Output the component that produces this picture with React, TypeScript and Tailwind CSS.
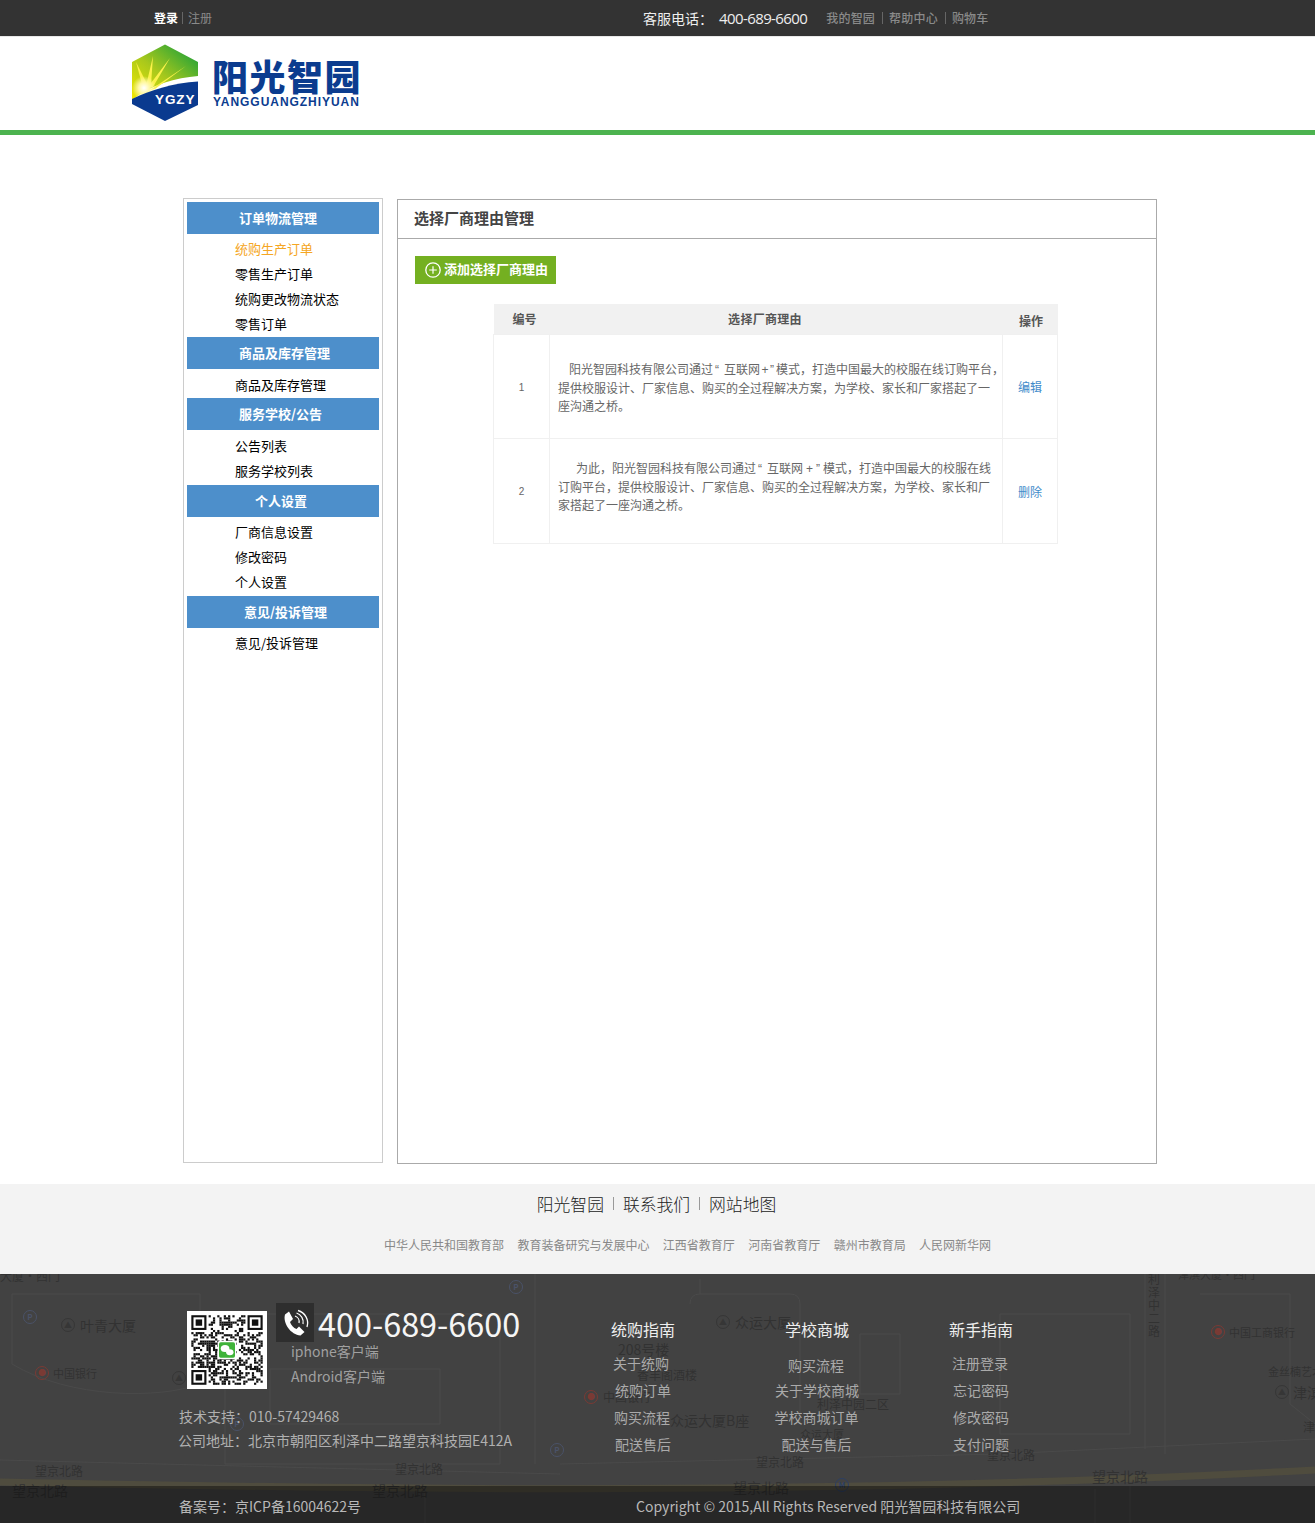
const menu = [
  { title: '订单物流管理', head: 'pl-[52px]', body: 'pt-[3px]', items: ['统购生产订单', '零售生产订单', '统购更改物流状态', '零售订单'] },
  { title: '商品及库存管理', head: 'pl-[52px]', body: 'pt-[4px]', items: ['商品及库存管理'] },
  { title: '服务学校/公告', head: 'pl-[52px]', body: 'pt-[4px] pb-px', items: ['公告列表', '服务学校列表'] },
  { title: '个人设置', head: 'pl-[68px]', body: 'pt-[3px] pb-px', items: ['厂商信息设置', '修改密码', '个人设置'] },
  { title: '意见/投诉管理', head: 'pl-[57px]', body: 'pt-[3px]', items: ['意见/投诉管理'] },
];

const guides = [
  { title: '统购指南', width: 'ml-0', items: [['关于统购', 'pr-[4px]'], ['统购订单', ''], ['购买流程', 'pr-[2px]'], ['配送售后', '']] },
  { title: '学校商城', width: 'ml-[54px]', items: [['购买流程', 'pr-[2px] pt-[2px]'], ['关于学校商城', ''], ['学校商城订单', 'pr-px'], ['配送与售后', 'pr-px']] },
  { title: '新手指南', width: 'ml-[44px]', items: [['注册登录', 'pr-[2px]'], ['忘记密码', ''], ['修改密码', ''], ['支付问题', '']] },
];

// 地图上的文字，位置相对底部区域
const mapLabels = [
  { text: '大厦·西门', x: 0, y: -8, cls: 'text-[12px]' },
  { text: '叶青大厦', x: 80, y: 41, cls: 'text-[14px]' },
  { text: '中国银行', x: 53, y: 89, cls: 'text-[11px]' },
  { text: '望京北路', x: 35, y: 187, cls: 'text-[12px]' },
  { text: '望京北路', x: 12, y: 206, cls: 'text-[14px]' },
  { text: '望京北路', x: 395, y: 185, cls: 'text-[12px]' },
  { text: '望京北路', x: 372, y: 206, cls: 'text-[14px]' },
  { text: '众运大厦', x: 735, y: 38, cls: 'text-[14px]' },
  { text: '208号楼', x: 618, y: 65, cls: 'text-[14px]' },
  { text: '香丰阁酒楼', x: 637, y: 91, cls: 'text-[12px]' },
  { text: '中国银行', x: 603, y: 113, cls: 'text-[12px]' },
  { text: '众运大厦B座', x: 670, y: 136, cls: 'text-[14px]' },
  { text: '利泽中园二区', x: 817, y: 120, cls: 'text-[12px]' },
  { text: '众运大厦', x: 800, y: 150, cls: 'text-[11px]' },
  { text: '望京北路', x: 756, y: 178, cls: 'text-[12px]' },
  { text: '望京北路', x: 733, y: 203, cls: 'text-[14px]' },
  { text: '望京北路', x: 987, y: 171, cls: 'text-[12px]' },
  { text: '望京北路', x: 1092, y: 192, cls: 'text-[14px] text-[#5a5436]' },
  { text: '中国工商银行', x: 1229, y: 48, cls: 'text-[11px]' },
  { text: '金丝楠艺术', x: 1268, y: 87, cls: 'text-[11px]' },
  { text: '津滨', x: 1293, y: 108, cls: 'text-[14px]' },
  { text: '津', x: 1303, y: 143, cls: 'text-[12px]' },
  { text: '津滨大厦·西门', x: 1178, y: -10, cls: 'text-[11px]' },
];

const mapPins = [
  { x: 30, y: 43, t: 'P', cls: 'border-[#4a5268] text-[#4a5268]' },
  { x: 516, y: 13, t: 'P', cls: 'border-[#4a5268] text-[#4a5268]' },
  { x: 557, y: 176, t: 'P', cls: 'border-[#4a5268] text-[#4a5268]' },
  { x: 237, y: 150, t: 'P', cls: 'border-[#4a5268] text-[#4a5268]' },
  { x: 42, y: 99, t: '●', cls: 'border-[#7a3a34] text-[#7a3a34]' },
  { x: 591, y: 123, t: '●', cls: 'border-[#7a3a34] text-[#7a3a34]' },
  { x: 1218, y: 58, t: '●', cls: 'border-[#7a3a34] text-[#7a3a34]' },
  { x: 68, y: 51, t: '▲', cls: 'border-[#363636] text-[#363636]' },
  { x: 179, y: 104, t: '▲', cls: 'border-[#363636] text-[#363636]' },
  { x: 723, y: 48, t: '▲', cls: 'border-[#363636] text-[#363636]' },
  { x: 1282, y: 118, t: '▲', cls: 'border-[#363636] text-[#363636]' },
  { x: 842, y: 211, t: 'M', cls: 'border-[#2c3f63] text-[#2c3f63]' },
];

function Logo() {
  return (
    <svg width="70" height="80" viewBox="130 43 70 80" className="shrink-0">
      <defs>
        <linearGradient id="top" x1="0" y1="1" x2="1" y2="0">
          <stop offset="0" stopColor="#f4e900" />
          <stop offset="0.45" stopColor="#a8c81c" />
          <stop offset="1" stopColor="#079a3e" />
        </linearGradient>
        <radialGradient id="sun" cx="0.5" cy="0.5" r="0.5">
          <stop offset="0" stopColor="#ffffff" />
          <stop offset="0.45" stopColor="#fff9a8" />
          <stop offset="1" stopColor="#fff9a8" stopOpacity="0" />
        </radialGradient>
      </defs>
      <path d="M165 44.5 L198 62 V76 C176 78 152 84 132 100 V62 Z" fill="url(#top)" />
      <path d="M143 88 L136 62 L147 84 Z M146 86 L153 56 L151 85 Z M148 87 L170 58 L153 87 Z M150 90 L186 66 L155 89 Z" fill="#fbf24a" />
      <circle cx="144" cy="88" r="12" fill="url(#sun)" />
      <path d="M198 81.5 V105 L165 121 L132 104 V99 C150 90 174 83 198 81.5 Z" fill="#0a3a8f" />
      <text x="155" y="103.5" fill="#ffffff" fontSize="13.5" fontWeight="700" letterSpacing="0.9" fontFamily="'Liberation Sans', sans-serif">
        YGZY
      </text>
    </svg>
  );
}

function QrCode() {
  const n = 33;
  const inFinder = (x: number, y: number) =>
    (x < 8 && y < 8) || (x >= n - 8 && y < 8) || (x < 8 && y >= n - 8);
  const cells: [number, number][] = [];
  for (let y = 0; y < n; y++) {
    for (let x = 0; x < n; x++) {
      if (inFinder(x, y)) continue;
      const s = Math.sin(x * 12.9898 + y * 78.233) * 43758.5453;
      if (s - Math.floor(s) < 0.5) cells.push([x, y]);
    }
  }
  const finders = [
    [0, 0],
    [n - 7, 0],
    [0, n - 7],
  ];
  return (
    <svg viewBox="-2 -2 37 37" preserveAspectRatio="none" className="w-[80px] h-[78px] bg-white shrink-0 mt-[8px] ml-[9px]">
      {cells.map(([x, y]) => (
        <rect key={`${x}-${y}`} x={x} y={y} width="1.02" height="1.02" fill="#111" />
      ))}
      {finders.map(([x, y]) => (
        <g key={`${x}-${y}`}>
          <rect x={x + 0.5} y={y + 0.5} width="6" height="6" fill="none" stroke="#111" />
          <rect x={x + 2} y={y + 2} width="3" height="3" fill="#111" />
        </g>
      ))}
      <rect x="12.2" y="12.2" width="8.6" height="8.6" rx="0.8" fill="#ffffff" />
      <rect x="12.8" y="12.8" width="7.4" height="7.4" rx="0.8" fill="#3fb33a" />
      <ellipse cx="15.6" cy="15.8" rx="2" ry="1.7" fill="#ffffff" />
      <ellipse cx="17.8" cy="17.6" rx="1.7" ry="1.4" fill="#ffffff" />
    </svg>
  );
}

function PhoneIcon() {
  return (
    <svg width="38" height="39" viewBox="0 0 38 39" className="bg-[#2e2e2e] shrink-0">
      <path
        d="M9 11.5 L13 8.5 L17 16 L14 19 C15 22 17.5 25 20.5 26 L23 23.5 L28.5 29 L24.5 32.5 C15 32 6.5 20 9 11.5 Z"
        fill="#ffffff"
      />
      <path d="M19 13 A6 6 0 0 1 23 20" fill="none" stroke="#ffffff" strokeWidth="1.3" />
      <path d="M20.5 10 A9.5 9.5 0 0 1 27 21" fill="none" stroke="#ffffff" strokeWidth="1.3" />
      <path d="M22 7.5 A13 13 0 0 1 31 24" fill="none" stroke="#ffffff" strokeWidth="1.3" />
    </svg>
  );
}

function PlusIcon() {
  return (
    <svg width="16" height="16" viewBox="0 0 16 16" fill="none" stroke="#ffffff" className="shrink-0">
      <circle cx="8" cy="8" r="7.2" strokeWidth="1.3" />
      <path d="M8 4.2 V11.8 M4.2 8 H11.8" strokeWidth="1.2" />
    </svg>
  );
}

function MapLayer() {
  return (
    <div className="absolute inset-0 overflow-hidden">
      <svg className="absolute inset-0 w-full h-full" fill="none" stroke="#4a4a4a" strokeWidth="1">
        <path d="M0 208 C300 214 800 224 1315 196" stroke="#4f4c3e" strokeWidth="7" />
        <path d="M0 186 L560 200 M560 190 L1000 180 L1315 165" />
        <path d="M12 20 H200 V110 C160 125 70 125 12 90 Z" />
        <path d="M225 40 H500 V190 H225 Z" />
        <path d="M270 95 H440 V150 H270 Z" />
        <path d="M535 0 V190 M1145 0 V175 M1165 0 V180" />
        <path d="M690 30 Q690 20 700 20 H790 Q800 20 800 30 V150" />
        <path d="M700 20 V5 M860 60 H900 V120 H860 Z" />
        <path d="M1000 40 H1130 V160 H1000 Z" />
        <path d="M1200 20 H1290 V130 L1315 150" />
        <path d="M425 212 V249 M1095 215 V249 M1130 212 V249" />
      </svg>
      {mapLabels.map((l, i) => (
        <span
          key={i}
          className={`absolute leading-[16px] whitespace-nowrap text-[#323232] ${l.cls}`}
          style={{ left: l.x, top: l.y + 2 }}
        >
          {l.text}
        </span>
      ))}
      <span className="absolute left-[1148px] top-[-2px] w-[12px] text-[12px] leading-[13px] text-[#323232]">利泽中二路</span>
      {mapPins.map((p, i) => (
        <span
          key={i}
          className={`absolute w-[14px] h-[14px] rounded-full border flex items-center justify-center text-[8px] leading-none font-bold ${p.cls}`}
          style={{ left: p.x - 7, top: p.y - 7 }}
        >
          {p.t}
        </span>
      ))}
    </div>
  );
}

const quoteFont = "font-['Liberation_Sans',sans-serif]";

export default function App() {
  return (
    <div lang="zh-CN" className="w-[1315px] bg-white font-['Noto_Sans_CJK_SC','Liberation_Sans',sans-serif]">
      {/* 顶部 */}
      <div className="h-[37px] bg-[#333333] border-b border-[#e8e8e8] flex items-center pl-[154px]">
        <span className="text-[12px] leading-[16px] font-bold text-white">登录</span>
        <span className="ml-[4px] w-px h-[12px] bg-[#666666]" />
        <span className="ml-[5px] text-[12px] leading-[16px] text-[#8a8a8a]">注册</span>
        <span className="ml-[431px] text-[14px] leading-[20px] text-[#eeeeee]">客服电话：</span>
        <span className="ml-[6px] text-[15px] leading-[20px] tracking-[-0.6px] text-[#eeeeee] font-['Open_Sans',sans-serif]">400-689-6600</span>
        <span className="ml-[19px] text-[12px] leading-[16px] tracking-[0.2px] font-medium text-[#8a8a8a]">我的智园</span>
        <span className="ml-[7px] w-px h-[12px] bg-[#666666]" />
        <span className="ml-[6px] text-[12px] leading-[16px] tracking-[0.2px] font-medium text-[#8a8a8a]">帮助中心</span>
        <span className="ml-[7px] w-px h-[12px] bg-[#666666]" />
        <span className="ml-[6px] text-[12px] leading-[16px] tracking-[0.2px] font-medium text-[#8a8a8a]">购物车</span>
      </div>

      {/* logo */}
      <div className="h-[93px] pl-[130px] pt-[6px] flex items-start">
        <Logo />
        <div className="ml-[12px] mt-[10px]">
          <div className="text-[36px] leading-[44px] font-black tracking-[1.5px] text-[#0b3c8f] whitespace-nowrap">阳光智园</div>
          <div className="-mt-[1px] pl-px text-[12px] leading-[12px] font-bold tracking-[0.95px] text-[#0b3c8f] whitespace-nowrap font-['Liberation_Sans',sans-serif]">YANGGUANGZHIYUAN</div>
        </div>
      </div>
      <div className="h-[5px] bg-[#4cb34f]" />

      {/* 内容 */}
      <div className="h-[1049px] pt-[63px] pl-[183px] flex items-start">
        <div className="w-[200px] h-[965px] border border-[#cccccc] pt-[3px] px-[3px]">
          {menu.map((group) => (
            <div key={group.title}>
              <div className={`h-[32px] bg-[#4d8fcb] text-[13px] leading-[31px] font-bold text-white ${group.head}`}>{group.title}</div>
              <div className={group.body}>
                {group.items.map((item, i) => (
                  <div
                    key={item}
                    className={`h-[25px] pl-[48px] text-[13px] leading-[23px] ${group.title === '订单物流管理' && i === 0 ? 'text-[#f5a623]' : 'text-black'}`}
                  >
                    {item}
                  </div>
                ))}
              </div>
            </div>
          ))}
        </div>

        <div className="ml-[14px] mt-px w-[760px] h-[965px] border border-[#aaaaaa]">
          <div className="h-[39px] border-b border-[#aaaaaa] pl-[16px] text-[15px] leading-[36px] font-bold text-[#444444]">选择厂商理由管理</div>
          <div className="mt-[17px] ml-[17px] w-[141px] h-[28px] bg-[#74b021] flex items-center pl-[10px]">
            <PlusIcon />
            <span className="ml-[3px] -mt-[2px] text-[13px] leading-[28px] font-bold text-white whitespace-nowrap">添加选择厂商理由</span>
          </div>

          <table className="mt-[20px] ml-[95px] w-[564px] table-fixed border-collapse text-[12px] text-[#666666]">
            <colgroup>
              <col className="w-[56px]" />
              <col className="w-[453px]" />
              <col className="w-[55px]" />
            </colgroup>
            <thead>
              <tr className="h-[30px] bg-[#f1f1f1] text-[#555555] font-bold">
                <th className="pl-[6px]">编号</th>
                <th className="pr-[22px] tracking-[0.3px]">选择厂商理由</th>
                <th className="pt-[4px] pl-[2px]">操作</th>
              </tr>
            </thead>
            <tbody>
              <tr className="h-[104px]">
                <td className="border border-[#f0f0f0] pt-[2px] text-center text-[10px] text-[#666666] font-['Liberation_Sans',sans-serif]">1</td>
                <td className="border border-[#f0f0f0] pl-[8px] pt-[2px] leading-[18px] whitespace-nowrap">
                  <span className="pl-[11px]">
                    阳光智园科技有限公司通过
                    <span className={`inline-block w-[11px] pl-[2px] ${quoteFont}`}>“</span>
                    互联网
                    <span className={`inline-block w-[10px] text-center ${quoteFont}`}>+</span>
                    <span className={`inline-block w-[6px] ${quoteFont}`}>”</span>
                    模式，打造中国最大的校服在线订购平台，
                  </span>
                  <br />
                  提供校服设计、厂家信息、购买的全过程解决方案，为学校、家长和厂家搭起了一
                  <br />
                  座沟通之桥。
                </td>
                <td className="border border-[#f0f0f0] pt-[2px] text-center text-[#428bca]">编辑</td>
              </tr>
              <tr className="h-[105px]">
                <td className="border border-[#f0f0f0] pt-[2px] text-center text-[10px] text-[#666666] font-['Liberation_Sans',sans-serif]">2</td>
                <td className="border border-[#f0f0f0] pl-[8px] pb-[8px] leading-[18px] whitespace-nowrap">
                  <span className="pl-[18px]">
                    为此，阳光智园科技有限公司通过
                    <span className={`inline-block w-[11px] pl-[2px] ${quoteFont}`}>“</span>
                    互联网
                    <span className={`inline-block w-[13px] text-center ${quoteFont}`}>+</span>
                    <span className={`inline-block w-[7px] ${quoteFont}`}>”</span>
                    模式，打造中国最大的校服在线
                  </span>
                  <br />
                  订购平台，提供校服设计、厂家信息、购买的全过程解决方案，为学校、家长和厂
                  <br />
                  家搭起了一座沟通之桥。
                </td>
                <td className="border border-[#f0f0f0] pt-[2px] text-center text-[#428bca]">删除</td>
              </tr>
            </tbody>
          </table>
        </div>
      </div>

      {/* 友情链接 */}
      <div className="h-[90px] bg-[#f3f3f3]">
        <div className="flex justify-center items-center h-[39px] pr-[2px] text-[16.8px] leading-[24px] font-light text-[#222222]">
          <span>阳光智园</span>
          <span className="mx-[9px] w-px h-[13px] bg-[#999999]" />
          <span>联系我们</span>
          <span className="mx-[9px] w-px h-[13px] bg-[#999999]" />
          <span>网站地图</span>
        </div>
        <div className="mt-[12px] pl-[384px] flex gap-[13.4px] text-[12px] leading-[20px] text-[#888888]">
          <span>中华人民共和国教育部</span>
          <span>教育装备研究与发展中心</span>
          <span>江西省教育厅</span>
          <span>河南省教育厅</span>
          <span>赣州市教育局</span>
          <span>人民网新华网</span>
        </div>
      </div>

      {/* 底部 */}
      <div className="relative h-[249px] bg-[#424242] overflow-hidden">
        <MapLayer />
        <div className="relative h-[212px] pl-[178px] flex items-start">
          <div className="w-[405px] pt-[29px]">
            <div className="flex items-start">
              <QrCode />
              <div className="ml-[9px]">
                <div className="flex items-center h-[39px]">
                  <PhoneIcon />
                  <span className="ml-[4px] text-[32.4px] leading-[40px] text-[#f5f5f5] font-normal">400-689-6600</span>
                </div>
                <div className="pl-[15px] -mt-px h-[20px] text-[14px] leading-[20px] text-[#a0a0a0]">iphone客户端</div>
                <div className="pl-[15px] mt-[5px] h-[20px] text-[14px] leading-[20px] text-[#a0a0a0]">Android客户端</div>
              </div>
            </div>
            <div className="mt-[17px] pl-px h-[20px] text-[14px] leading-[20px] text-[#b0b0b0]">技术支持：010-57429468</div>
            <div className="mt-[4px] h-[20px] text-[14px] leading-[20px] text-[#b0b0b0] whitespace-nowrap">公司地址：北京市朝阳区利泽中二路望京科技园E412A</div>
          </div>
          <div className="pt-[45px] flex">
            {guides.map((col) => (
              <div key={col.title} className={`w-[120px] text-center ${col.width}`}>
                <div className="h-[20px] text-[16px] leading-[20px] text-[#eeeeee]">{col.title}</div>
                <div className="mt-[11px]">
                  {col.items.map(([item, cls]) => (
                    <div key={item} className={`h-[27px] text-[14px] leading-[27px] text-[#aaaaaa] ${cls}`}>{item}</div>
                  ))}
                </div>
              </div>
            ))}
          </div>
        </div>
        <div className="relative h-[37px] bg-black/40 flex items-center pl-[179px] pt-[2px] text-[14px] leading-[20px] text-[#b8b8b8]">
          <span>备案号：京ICP备16004622号</span>
          <span className="ml-[275px]">Copyright © 2015,All Rights Reserved 阳光智园科技有限公司</span>
        </div>
      </div>
    </div>
  );
}
